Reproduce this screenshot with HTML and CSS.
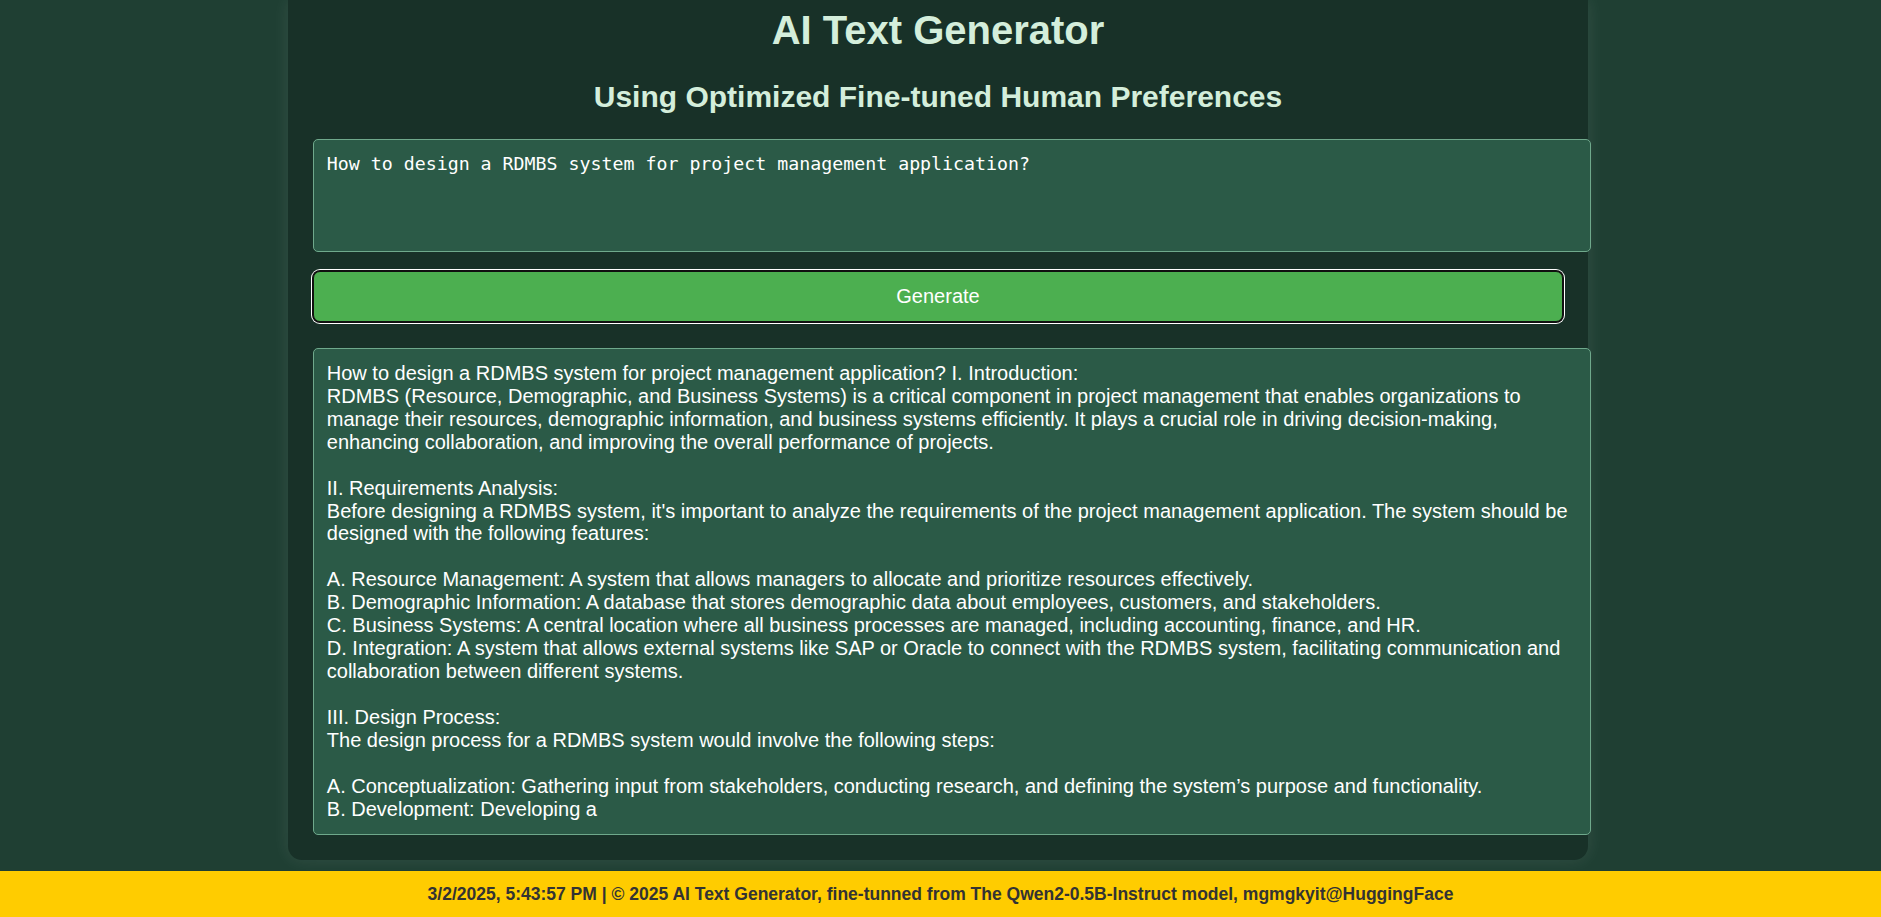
FILE: index.html
```html
<!DOCTYPE html>
<html lang="en">
<head>
<meta charset="utf-8">
<title>AI Text Generator</title>
<link rel="stylesheet" href="styles.css">
</head>
<body>
<div class="page">
  <main class="card">
    <h1 class="title">AI Text Generator</h1>
    <h2 class="subtitle">Using Optimized Fine-tuned Human Preferences</h2>
    <textarea class="prompt">How to design a RDMBS system for project management application?</textarea>
    <button class="generate" type="button">Generate</button>
    <div class="output">How to design a RDMBS system for project management application? I. Introduction:
RDMBS (Resource, Demographic, and Business Systems) is a critical component in project management that enables organizations to manage their resources, demographic information, and business systems efficiently. It plays a crucial role in driving decision-making, enhancing collaboration, and improving the overall performance of projects.

II. Requirements Analysis:
Before designing a RDMBS system, it's important to analyze the requirements of the project management application. The system should be designed with the following features:

A. Resource Management: A system that allows managers to allocate and prioritize resources effectively.
B. Demographic Information: A database that stores demographic data about employees, customers, and stakeholders.
C. Business Systems: A central location where all business processes are managed, including accounting, finance, and HR.
D. Integration: A system that allows external systems like SAP or Oracle to connect with the RDMBS system, facilitating communication and collaboration between different systems.

III. Design Process:
The design process for a RDMBS system would involve the following steps:

A. Conceptualization: Gathering input from stakeholders, conducting research, and defining the system’s purpose and functionality.
B. Development: Developing a</div>
  </main>
</div>
<footer class="footer">3/2/2025, 5:43:57 PM | © 2025 AI Text Generator, fine-tunned from The Qwen2-0.5B-Instruct model, mgmgkyit@HuggingFace</footer>
</body>
</html>
```

FILE: styles.css
```css
html, body {
  margin: 0;
  padding: 0;
}

body {
  background: #1f3f33;
  font-family: "Liberation Sans", Arial, sans-serif;
  overflow: hidden;
}

.page {
  padding-right: 5px;
}

.card {
  max-width: 1300px;
  box-sizing: border-box;
  margin: 0 auto;
  padding: 8px 25px 25px;
  background: #183128;
  border-radius: 0 0 14px 14px;
  box-shadow: 0 0 18px rgba(255, 255, 255, 0.09);
}

.title {
  margin: 0 0 27px;
  font-size: 40px;
  font-weight: bold;
  text-align: center;
  color: #d4eedb;
}

.subtitle {
  margin: 0 0 25px;
  font-size: 30px;
  font-weight: bold;
  text-align: center;
  color: #d4eedb;
}

.prompt {
  display: block;
  width: 100%;
  height: 85.4px;
  margin: 0;
  padding: 0.8rem;
  border: 1px solid #6fa98c;
  border-radius: 5px;
  background: #2b5a47;
  color: #ffffff;
  font-family: "DejaVu Sans Mono", "Liberation Mono", monospace;
  font-size: 18.25px;
  resize: none;
  outline: none;
}

.generate {
  display: block;
  width: 100%;
  box-sizing: border-box;
  margin: 19px 0 26px;
  padding: 13px;
  border: 1px solid #101010;
  border-radius: 7px;
  box-shadow: 0 0 0 1px #101010, 0 0 0 2px #ffffff;
  background: #4caf50;
  color: #ffffff;
  font-family: "Liberation Sans", Arial, sans-serif;
  font-size: 20px;
  line-height: 23px;
  cursor: pointer;
}

.output {
  width: 100%;
  padding: 0.8rem;
  border: 1px solid #6fa98c;
  border-radius: 5px;
  background: #2b5a47;
  color: #ffffff;
  font-size: 20px;
  line-height: 22.95px;
  white-space: pre-wrap;
}

.footer {
  margin-top: 11px;
  padding: 13px;
  background: #ffcc00;
  color: #333333;
  font-size: 17.5px;
  font-weight: bold;
  text-align: center;
}
```
